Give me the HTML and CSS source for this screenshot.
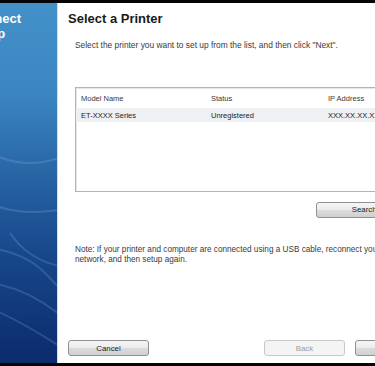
FILE: index.html
```html
<!DOCTYPE html>
<html>

<head>
    <meta charset="UTF-8">
    <title>Select a Printer</title>
    <link rel="stylesheet" href="styles.css">
</head>

<body>
    <div class="frame">
        <div class="sidebar">
            <svg class="swirls" width="57" height="360" viewBox="0 0 57 360">
                <path d="M-10 150 Q 30 170 70 150" />
                <path d="M-10 200 Q 20 215 70 205" />
                <path d="M-10 245 Q 25 250 45 270 T 70 300" />
                <path d="M-10 280 Q 30 285 70 320" />
                <path d="M-10 305 Q 25 320 70 350" />
                <path d="M10 230 Q 30 260 70 265" />
            </svg>
            <div class="sidebar-title">
                <div>Connect</div>
                <div>Setup</div>
            </div>
        </div>

        <div class="panel">
            <h1 class="title">Select a Printer</h1>
            <p class="lead">Select the printer you want to set up from the list, and then click "Next".</p>

            <div class="printer-list">
                <div class="row head">
                    <span class="col-name">Model Name</span>
                    <span class="col-status">Status</span>
                    <span class="col-ip">IP Address</span>
                </div>
                <div class="row selected">
                    <span class="col-name">ET-XXXX Series</span>
                    <span class="col-status">Unregistered</span>
                    <span class="col-ip">XXX.XX.XX.XX</span>
                </div>
            </div>

            <div class="search-row">
                <button class="btn search">Search Again</button>
            </div>

            <p class="note">Note: If your printer and computer are connected using a USB cable, reconnect your printer to the<br>network, and then setup again.</p>

            <div class="actions">
                <button class="btn">Cancel</button>
                <div class="nav">
                    <button class="btn" disabled>Back</button>
                    <button class="btn">Next</button>
                </div>
            </div>
        </div>
    </div>
</body>

</html>
```

FILE: styles.css
```css
body {
    margin: 0;
    padding: 3px 0;
    background: #050505;
    font-family: "Liberation Sans", Arial, sans-serif;
    overflow: hidden;
}

.frame {
    display: flex;
    height: 360px;
}

.sidebar {
    position: relative;
    width: 57px;
    flex-shrink: 0;
    overflow: hidden;
    background: linear-gradient(180deg, #4391c9 0%, #3b86c2 25%, #2a68a8 45%, #17478a 70%, #0b2b6c 100%);
}

.swirls {
    position: absolute;
    left: 0;
    top: 0;
}

.swirls path {
    fill: none;
    stroke: rgba(180, 210, 255, 0.18);
    stroke-width: 2;
}

.sidebar-title {
    position: relative;
    margin: 8px 0 0 -31px;
    color: #ffffff;
    font-size: 13px;
    font-weight: bold;
    line-height: 15px;
    white-space: nowrap;
}

.panel {
    flex: 1;
    background: #ffffff;
    border-left: 1px solid #d8dde2;
    padding: 0 0 0 10px;
    display: flex;
    flex-direction: column;
    overflow: hidden;
}

.title {
    margin: 8px 0 0;
    font-size: 13px;
    font-weight: bold;
    line-height: 16px;
    color: #1a1a1a;
}

.lead {
    margin: 13px 0 0 7px;
    font-size: 8.4px;
    line-height: 10px;
    color: #3a3a3a;
    white-space: nowrap;
}

.printer-list {
    margin: 37px 0 0 7px;
    width: 330px;
    height: 100px;
    border: 1px solid #b4b4b4;
    box-shadow: inset 1px 1px 0 #e6e6e6;
    padding-top: 3px;
    flex-shrink: 0;
}

.row {
    display: flex;
    height: 14px;
    align-items: center;
    padding-left: 5px;
    font-size: 7.5px;
    color: #3a3a3a;
    white-space: nowrap;
}

.row.selected {
    margin-top: 3px;
    background: #eef0f3;
    color: #222222;
}

.col-name {
    width: 130px;
}

.col-status {
    width: 117px;
}

.search-row {
    margin-top: 6px;
    padding-left: 248px;
}

.btn {
    width: 81px;
    height: 16px;
    padding: 0;
    border: 1px solid #909090;
    border-radius: 3px;
    background: linear-gradient(180deg, #f6f6f6 0%, #ebebeb 50%, #dcdcdc 51%, #d0d0d0 100%);
    font-family: "Liberation Sans", Arial, sans-serif;
    font-size: 7.8px;
    color: #222222;
    white-space: nowrap;
}

.btn.search {
    width: 118px;
}

.btn:disabled {
    border-color: #c8c8c8;
    background: #f4f4f4;
    color: #9a9a9a;
}

.note {
    margin: 27px 0 0 7px;
    font-size: 8.2px;
    line-height: 10px;
    color: #3a3a3a;
    white-space: nowrap;
}

.actions {
    margin-top: auto;
    margin-bottom: 7px;
    display: flex;
    justify-content: space-between;
    width: 368px;
}

.nav {
    display: flex;
    gap: 10px;
}
```
